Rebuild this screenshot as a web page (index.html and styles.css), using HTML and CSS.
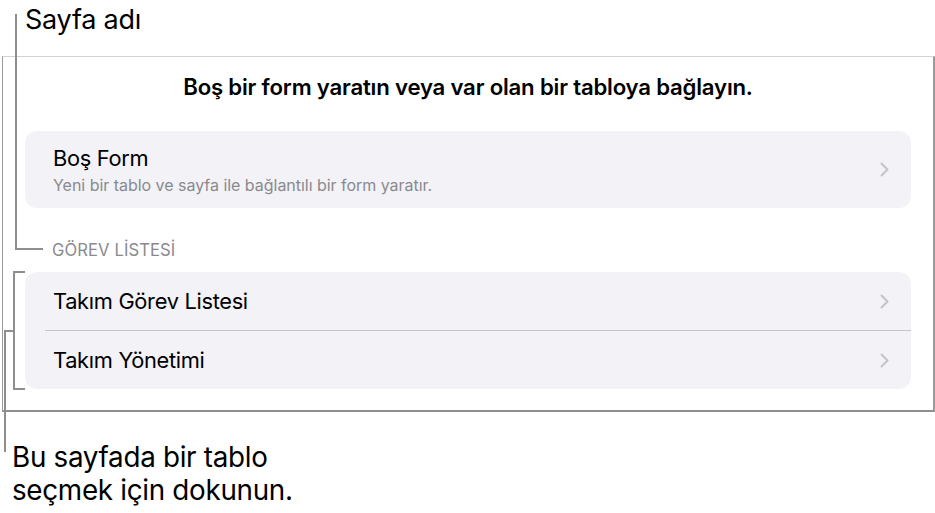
FILE: index.html
```html
<!DOCTYPE html>
<html lang="tr">
<head>
<meta charset="utf-8">
<link rel="stylesheet" href="styles.css">
</head>
<body>
<div class="page">
  <div class="callout-top">Sayfa adı</div>
  <section class="frame">
    <h1 class="title">Boş bir form yaratın veya var olan bir tabloya bağlayın.</h1>
    <div class="card card-first">
      <div class="row row-tall">
        <div class="row-text">
          <div class="row-label">Boş Form</div>
          <div class="row-sub">Yeni bir tablo ve sayfa ile bağlantılı bir form yaratır.</div>
        </div>
        <svg class="chev" width="9" height="15" viewBox="0 0 9 15"><path d="M1.5 1.5 L7.5 7.5 L1.5 13.5" fill="none" stroke="#c4c4c7" stroke-width="2" stroke-linecap="round" stroke-linejoin="round"/></svg>
      </div>
    </div>
    <div class="section-head">GÖREV LİSTESİ</div>
    <div class="card card-list">
      <div class="row">
        <div class="row-label">Takım Görev Listesi</div>
        <svg class="chev" width="9" height="15" viewBox="0 0 9 15"><path d="M1.5 1.5 L7.5 7.5 L1.5 13.5" fill="none" stroke="#c4c4c7" stroke-width="2" stroke-linecap="round" stroke-linejoin="round"/></svg>
      </div>
      <div class="row row-sep">
        <div class="row-label">Takım Yönetimi</div>
        <svg class="chev" width="9" height="15" viewBox="0 0 9 15"><path d="M1.5 1.5 L7.5 7.5 L1.5 13.5" fill="none" stroke="#c4c4c7" stroke-width="2" stroke-linecap="round" stroke-linejoin="round"/></svg>
      </div>
    </div>
  </section>
  <div class="callout-bottom">Bu sayfada bir tablo<br>seçmek için dokunun.</div>

  <div class="line line-a-v"></div>
  <div class="line line-a-h"></div>
  <div class="line bracket-v"></div>
  <div class="line bracket-t"></div>
  <div class="line bracket-b"></div>
  <div class="line bracket-m"></div>
  <div class="line line-b-v"></div>
</div>
</body>
</html>
```

FILE: styles.css
```css
* { box-sizing: border-box; }
html, body {
  margin: 0;
  padding: 0;
  background: #ffffff;
}
body {
  font-family: Inter, "Noto Sans", "Liberation Sans", sans-serif;
  color: #000;
}
.page {
  position: relative;
  width: 935px;
  height: 513px;
  overflow: hidden;
}
.callout-top {
  font-size: 27px;
  line-height: 32px;
  padding: 4px 0 0 25px;
  height: 56px;
  letter-spacing: -0.25px;
}
.frame {
  margin-left: 2px;
  width: 933px;
  height: 356px;
  border-top: 1px solid #d2d2d2;
  border-left: 1px solid #9a9a9a;
  border-right: 2px solid #9a9a9a;
  border-bottom: 2px solid #8e8e8e;
  padding: 16px 22px 0 22px;
  display: flex;
  flex-direction: column;
}
.title {
  margin: 0;
  text-align: center;
  font-size: 22.2px;
  line-height: 28px;
  font-weight: 600;
  letter-spacing: -0.2px;
}
.card {
  background: #f2f2f7;
  border-radius: 12px;
  padding-left: 20px;
}
.card-first {
  margin-top: 30px;
}
.card-list {
  margin-top: 12px;
}
.row {
  display: flex;
  align-items: center;
  justify-content: space-between;
  height: 58px;
  padding-right: 22px;
}
.row-tall {
  height: 77px;
}
.row-sep {
  height: 59px;
  border-top: 1px solid #c6c6c8;
}
.row-text {
  display: flex;
  flex-direction: column;
  gap: 4px;
}
.row-label {
  font-size: 21.8px;
  line-height: 26px;
  letter-spacing: -0.3px;
  padding-left: 8px;
}
.row-sub {
  font-size: 16px;
  line-height: 20px;
  color: #8a8a8e;
  padding-left: 8px;
  letter-spacing: -0.03px;
}
.chev {
  display: block;
}
.section-head {
  font-size: 16.6px;
  line-height: 20px;
  color: #8a8a8e;
  padding-left: 27px;
  margin-top: 32px;
  letter-spacing: 0.1px;
}
.callout-bottom {
  font-size: 27.8px;
  line-height: 33px;
  padding: 29px 0 0 12px;
  letter-spacing: -0.3px;
}
.line {
  position: absolute;
  background: #8e8e8e;
}
.line-a-v { left: 15px; top: 14px; width: 2px; height: 236px; }
.line-a-h { left: 15px; top: 248px; width: 28px; height: 2px; }
.bracket-v { left: 13px; top: 271px; width: 2px; height: 119px; }
.bracket-t { left: 13px; top: 271px; width: 12px; height: 2px; }
.bracket-b { left: 13px; top: 388px; width: 12px; height: 2px; }
.bracket-m { left: 4px; top: 330px; width: 10px; height: 2px; }
.line-b-v { left: 4px; top: 330px; width: 2px; height: 122px; }
```
